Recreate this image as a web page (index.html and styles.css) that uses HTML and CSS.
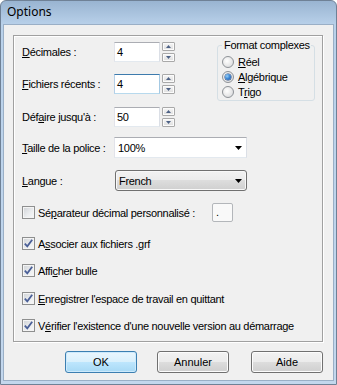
FILE: index.html
```html
<!DOCTYPE html>
<html>
<head>
<meta charset="utf-8">
<link rel="stylesheet" href="styles.css">
</head>
<body>
<div class="window">
  <div class="titlebar">Options</div>
  <div class="client">
    <div class="panel">
      <div class="top">
        <div class="fields">
          <div class="row">
            <span class="lbl"><u>D</u>écimales :</span>
            <span class="tb">4</span>
            <span class="spinbtns"><span class="sb"><svg width="5" height="3" viewBox="0 0 5 3"><polygon points="0,3 5,3 2.5,0" fill="#4d6185"/></svg></span><span class="sb"><svg width="5" height="3" viewBox="0 0 5 3"><polygon points="0,0 5,0 2.5,3" fill="#4d6185"/></svg></span></span>
          </div>
          <div class="row r2">
            <span class="lbl"><u>F</u>ichiers récents :</span>
            <span class="tb focus">4</span>
            <span class="spinbtns"><span class="sb"><svg width="5" height="3" viewBox="0 0 5 3"><polygon points="0,3 5,3 2.5,0" fill="#4d6185"/></svg></span><span class="sb"><svg width="5" height="3" viewBox="0 0 5 3"><polygon points="0,0 5,0 2.5,3" fill="#4d6185"/></svg></span></span>
          </div>
          <div class="row r3">
            <span class="lbl">Déf<u>a</u>ire jusqu'à :</span>
            <span class="tb">50</span>
            <span class="spinbtns"><span class="sb"><svg width="5" height="3" viewBox="0 0 5 3"><polygon points="0,3 5,3 2.5,0" fill="#4d6185"/></svg></span><span class="sb"><svg width="5" height="3" viewBox="0 0 5 3"><polygon points="0,0 5,0 2.5,3" fill="#4d6185"/></svg></span></span>
          </div>
        </div>
        <fieldset class="group">
          <legend>Format complexes</legend>
          <div class="radio-row"><span class="radio"></span><span class="rtext"><u>R</u>éel</span></div>
          <div class="radio-row"><span class="radio on"></span><span class="rtext"><u>A</u>lgébrique</span></div>
          <div class="radio-row"><span class="radio"></span><span class="rtext">T<u>r</u>igo</span></div>
        </fieldset>
      </div>
      <div class="row combo-row c1">
        <span class="lbl"><u>T</u>aille de la police :</span>
        <span class="combo edit"><span class="ctext">100%</span><svg class="arrow" width="7" height="4" viewBox="0 0 7 4"><polygon points="0,0 7,0 3.5,4" fill="#000"/></svg></span>
      </div>
      <div class="row combo-row c2">
        <span class="lbl"><u>L</u>angue :</span>
        <span class="combo list"><span class="ctext">French</span><svg class="arrow" width="7" height="4" viewBox="0 0 7 4"><polygon points="0,0 7,0 3.5,4" fill="#000"/></svg></span>
      </div>
      <div class="sep-row">
        <span class="cbwrap"><span class="cb"></span><span class="cbtext">Sé<u>p</u>arateur décimal personnalisé :</span></span>
        <span class="smallbox">.</span>
      </div>
      <div class="cbrow k1"><span class="cb checked"><svg width="11" height="11" viewBox="0 0 11 11"><path d="M1.8 5.6 L4.3 8.3 L9.2 1.8" fill="none" stroke="#4a5f97" stroke-width="1.8"/></svg></span><span class="cbtext">A<u>s</u>socier aux fichiers .grf</span></div>
      <div class="cbrow k2"><span class="cb checked"><svg width="11" height="11" viewBox="0 0 11 11"><path d="M1.8 5.6 L4.3 8.3 L9.2 1.8" fill="none" stroke="#4a5f97" stroke-width="1.8"/></svg></span><span class="cbtext">Affi<u>c</u>her bulle</span></div>
      <div class="cbrow k3"><span class="cb checked"><svg width="11" height="11" viewBox="0 0 11 11"><path d="M1.8 5.6 L4.3 8.3 L9.2 1.8" fill="none" stroke="#4a5f97" stroke-width="1.8"/></svg></span><span class="cbtext"><u>E</u>nregistrer l'espace de travail en quittant</span></div>
      <div class="cbrow k4"><span class="cb checked"><svg width="11" height="11" viewBox="0 0 11 11"><path d="M1.8 5.6 L4.3 8.3 L9.2 1.8" fill="none" stroke="#4a5f97" stroke-width="1.8"/></svg></span><span class="cbtext">V<u>é</u>rifier l'existence d'une nouvelle version au démarrage</span></div>
    </div>
    <div class="buttons">
      <span class="btn default b-ok">OK</span>
      <span class="btn b-cancel">Annuler</span>
      <span class="btn">Aide</span>
    </div>
  </div>
</div>
</body>
</html>
```
FILE: styles.css
```css
* { box-sizing: border-box; }
html, body { margin: 0; padding: 0; }
body {
  width: 337px;
  height: 385px;
  overflow: hidden;
  background: #ffffff;
  font-family: "Liberation Sans", Arial, sans-serif;
  font-size: 11px;
  letter-spacing: -0.3px;
  color: #000;
}
u { text-decoration: underline; text-underline-offset: 1px; }

.window {
  width: 337px;
  height: 385px;
  border: 1px solid #6f8196;
  border-radius: 6px 6px 0 0;
  background: linear-gradient(#99b4d1 0, #b9d1ea 24px, #c3d7ed 100%);
  display: flex;
  flex-direction: column;
  padding: 0 2px 3px 2px;
}
.titlebar {
  height: 23px;
  flex: none;
  font-family: "Noto Sans", "Open Sans", sans-serif;
  font-size: 12px;
  letter-spacing: 0;
  line-height: 22px;
  padding-left: 4px;
  color: #000;
}
.client {
  flex: 1;
  background: #f0f0f0;
  border: 1px solid #9aafc6;
  display: flex;
  flex-direction: column;
}

.panel {
  margin: 10px 0 0 9px;
  width: 310px;
  height: 307px;
  flex: none;
  border: 1px solid #a0a0a0;
  box-shadow: inset 1px 1px 0 #ffffff, 1px 1px 0 #ffffff;
  padding: 0 0 0 8px;
  display: flex;
  flex-direction: column;
}

.top { display: flex; align-items: flex-start; }
.fields { flex: none; padding-top: 6px; }

.row { display: flex; align-items: center; height: 20px; }
.r2 { margin-top: 12px; }
.r3 { margin-top: 13px; }
.lbl { width: 92px; flex: none; white-space: nowrap; }

.tb {
  width: 46px;
  height: 20px;
  background: #fff;
  border: 1px solid;
  border-color: #abadb3 #dbdfe6 #e3e9ef #e2e3ea;
  padding-left: 2px;
  line-height: 18px;
}
.tb.focus { border-color: #3d7bad #a4c9e3 #b7d9ed #b5cfe7; }

.spinbtns {
  margin-left: 2px;
  width: 13px;
  height: 20px;
  display: flex;
  flex-direction: column;
  justify-content: space-between;
}
.sb {
  height: 9px;
  border: 1px solid #a9a9a9;
  border-radius: 1px;
  background: linear-gradient(#f6f6f6, #dedede);
  box-shadow: inset 0 0 0 1px #fbfbfb;
  display: flex;
  align-items: center;
  justify-content: center;
}
.sb svg { display: block; }

.group {
  margin: 3px 7px 0 auto;
  width: 98px;
  border: 1px solid #d5dfe5;
  border-radius: 3px;
  padding: 2px 0 1px 4px;
  min-width: 0;
}
.group legend {
  padding: 0 1px 0 2px;
  line-height: 13px;
}
.radio-row { display: flex; align-items: center; height: 15px; }
.radio {
  width: 12px;
  height: 12px;
  border-radius: 50%;
  border: 1px solid #8e9297;
  background: radial-gradient(circle at 40% 40%, #ffffff 0, #f0f0f0 35%, #d2d4d7 100%);
  flex: none;
  display: flex;
  align-items: center;
  justify-content: center;
}
.radio.on::after {
  content: "";
  width: 6px;
  height: 6px;
  border-radius: 50%;
  background: radial-gradient(circle at 35% 35%, #9ad0f5 0, #3f8ad6 45%, #1c4f9c 100%);
  box-shadow: 0 0 0 0.5px #1d3f77;
}
.rtext { margin-left: 4px; white-space: nowrap; }

.combo-row { height: 21px; }
.c1 { margin-top: 10px; }
.c2 { margin-top: 12px; }
.combo {
  width: 133px;
  height: 21px;
  display: flex;
  align-items: center;
  padding-left: 3px;
}
.combo.edit {
  background: #fff;
  border: 1px solid;
  border-color: #abadb3 #dbdfe6 #e3e9ef #e2e3ea;
}
.combo.list {
  margin-left: 1px;
  width: 132px;
  border: 1px solid #707070;
  border-radius: 3px;
  background: linear-gradient(#f2f2f2 0, #ebebeb 50%, #dddddd 50%, #cfcfcf 100%);
  box-shadow: inset 0 0 0 1px #f8f8f8;
}
.arrow { margin-left: auto; margin-right: 4px; display: block; }

.sep-row {
  margin-top: 12px;
  height: 19px;
  display: flex;
  align-items: center;
}
.cbwrap { width: 190px; display: flex; align-items: center; flex: none; }
.smallbox {
  width: 21px;
  height: 19px;
  border: 1px solid #b3b6ba;
  border-radius: 2px;
  background: #f9f9f9;
  padding-left: 3px;
  line-height: 17px;
}

.cbrow { display: flex; align-items: center; height: 13px; }
.k1 { margin-top: 15px; }
.k2 { margin-top: 14px; }
.k3 { margin-top: 15px; }
.k4 { margin-top: 14px; }
.cb {
  width: 13px;
  height: 13px;
  flex: none;
  border: 1px solid #8e8f8f;
  background: linear-gradient(135deg, #cfd2d6 0, #eceef0 60%, #f8f8f8 100%);
  box-shadow: inset 0 0 0 1px #f4f4f4;
  display: flex;
  align-items: center;
  justify-content: center;
}
.cb svg { display: block; }
.cbtext { margin-left: 3px; white-space: nowrap; }

.buttons {
  margin-top: 9px;
  display: flex;
  justify-content: flex-end;
  padding-right: 10px;
}
.btn {
  width: 72px;
  height: 22px;
  border: 1px solid #707070;
  border-radius: 3px;
  background: linear-gradient(#f2f2f2 0, #ebebeb 50%, #dddddd 50%, #cfcfcf 100%);
  box-shadow: inset 0 0 0 1px #fcfcfc;
  display: flex;
  align-items: center;
  justify-content: center;
  letter-spacing: 0;
}
.btn.default {
  border-color: #3c7fb1;
  background: linear-gradient(#eaf6fd 0, #d9f0fc 50%, #bee6fd 50%, #a7d9f5 100%);
  box-shadow: inset 0 0 0 1px #cdeafc;
}
.b-ok { margin-right: 20px; }
.b-cancel { margin-right: 22px; }
```
